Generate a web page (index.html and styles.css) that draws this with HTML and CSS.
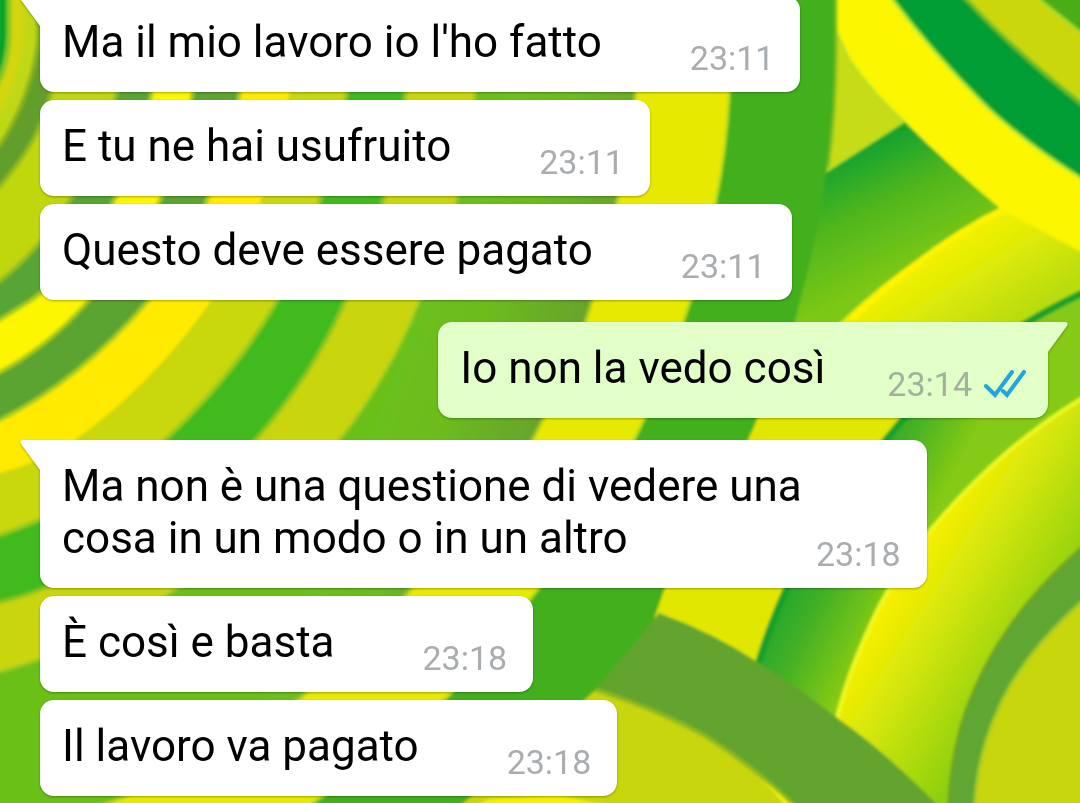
FILE: index.html
```html
<!DOCTYPE html>
<html lang="it">
<head>
  <meta charset="UTF-8">
  <meta name="viewport" content="width=device-width, initial-scale=1">
  <title>Chat</title>
  <link rel="stylesheet" href="styles.css">
</head>
<body>

  <!-- Wallpaper -->
  <svg class="wallpaper" viewBox="0 0 1080 803" preserveAspectRatio="xMidYMid slice" aria-hidden="true">
    <defs>
      <filter id="soft" x="-5%" y="-5%" width="110%" height="110%"><feGaussianBlur stdDeviation="1.6"/></filter>
      <linearGradient id="leaf" gradientUnits="userSpaceOnUse" x1="850" y1="145" x2="910" y2="270">
        <stop offset="0" stop-color="#0da032"/><stop offset=".45" stop-color="#4db51e"/><stop offset="1" stop-color="#7cc816"/>
      </linearGradient>
      <linearGradient id="leaf2" gradientUnits="userSpaceOnUse" x1="795" y1="500" x2="910" y2="560">
        <stop offset="0" stop-color="#0ba336"/><stop offset=".5" stop-color="#3fae26"/><stop offset="1" stop-color="#85ca14"/>
      </linearGradient>
      <linearGradient id="lemon" gradientUnits="userSpaceOnUse" x1="900" y1="570" x2="1030" y2="650">
        <stop offset="0" stop-color="#fbf000"/><stop offset=".4" stop-color="#d3e60a"/><stop offset="1" stop-color="#8fd00c"/>
      </linearGradient>
      <linearGradient id="lemon2" gradientUnits="userSpaceOnUse" x1="940" y1="235" x2="1000" y2="330">
        <stop offset="0" stop-color="#f8f402"/><stop offset=".5" stop-color="#dbe907"/><stop offset="1" stop-color="#b9dc0e"/>
      </linearGradient>
      <linearGradient id="moss" gradientUnits="userSpaceOnUse" x1="380" y1="400" x2="530" y2="460">
        <stop offset="0" stop-color="#6bc019"/><stop offset=".4" stop-color="#6cbc1e"/><stop offset="1" stop-color="#66a32c"/>
      </linearGradient>
    </defs>
    <g filter="url(#soft)">
      <rect x="-20" y="-20" width="1120" height="843" fill="#fcf600"/>

      <!-- right side, top corner -->
      <path d="M893 -20V0Q933 53 980 100Q1020 141 1100 190V-20Z" fill="#009e34" stroke="#a8e82c" stroke-width="3"/>
      <path d="M947 -20L967 0Q1020 57 1100 118V-20Z" fill="#cbd70c" stroke="#6cbf22" stroke-width="4"/>
      <path d="M1020 -20L1040 0L1100 48V-20Z" fill="#4cad18" stroke="#a6dc28" stroke-width="3"/>

      <!-- right side, middle -->
      <path d="M836 30L850 60Q875 95 905 122L826 172Z" fill="#c5dc14" stroke="#b5e52c" stroke-width="2"/>
      <path d="M827 172L905 122Q950 167 1002 210Q930 245 850 320L700 480V300Z" fill="url(#leaf)"/>
      <path d="M1002 210L1100 262V500H700L759 419Q850 285 1002 210Z" fill="url(#lemon2)"/>
      <path d="M1002 210Q930 245 852 319" fill="none" stroke="#fff400" stroke-width="6"/>
      <path d="M759 419L640 620L760 680L950 400Z" fill="#e1e705"/>
      <path d="M1100 285Q990 333 903 419Q835 500 786 590Q768 630 757 668L850 740L1100 500Z" fill="url(#leaf2)"/>
      <path d="M1100 285Q990 333 903 419Q835 500 786 590Q768 630 757 668" fill="none" stroke="#16a02c" stroke-width="7"/>
      <path d="M1100 388Q1033 425 977 480Q915 540 880 605Q848 670 836 722L940 823H1100Z" fill="url(#lemon)"/>
      <path d="M1100 388Q1033 425 977 480Q915 540 880 605Q848 670 836 722" fill="none" stroke="#eefb20" stroke-width="4"/>
      <path d="M1100 532Q1010 605 974 690Q949 745 948 823H1100Z" fill="#60a630" stroke="#6da526" stroke-width="3"/>
      <path d="M1100 586Q1026 647 999 707Q974 760 974 823H1100Z" fill="#c7d60b" stroke="#9fcb25" stroke-width="3"/>

      <!-- rings of the left side, outermost first -->
      <path d="M836 -20L836 50Q836 110 827 168Q816 245 795 320Q775 381 748 440Q712 512 664 590L652 625L602 690L620 720L470 823H-20V-20Z" fill="#42af1c"/>
      <path d="M836 -20L836 50Q836 110 828 168" fill="none" stroke="#7fbf1a" stroke-width="3"/>
      <path d="M735 -20L734 0Q734 50 729 96Q726 150 716 200Q706 255 690 301Q669 370 634 440Q593 518 537 590Q498 643 447 697Q391 752 318 799L285 823H-20V-20Z" fill="#e8e905" stroke="#b7df1a" stroke-width="3"/>
      <path d="M642 -20L641 0Q640 50 635 96Q629 150 617 200Q608 250 592 301Q570 370 532 440Q483 518 410 590Q363 642 301 697Q220 757 118 799L50 823H-20V-20Z" fill="url(#moss)" stroke="#a9ca18" stroke-width="3"/>
      <path d="M481 -20L480 0Q480 50 475 96Q470 150 457 200Q443 252 420 301Q391 374 340 440Q269 532 175 590Q90 648 0 672L-20 677V-20Z" fill="#c9d50d" stroke="#97cb20" stroke-width="3"/>
      <path d="M410 -20V0Q410 50 405 96Q399 150 383 200Q369 253 345 301Q312 376 255 440Q178 540 70 577Q35 594 0 602L-20 606V-20Z" fill="#40ba1c" stroke="#8bc51c" stroke-width="4"/>
      <path d="M351 -20V0Q351 50 346 96Q338 150 320 200Q306 250 277 301Q235 375 165 440Q88 506 0 535L-20 541V-20Z" fill="#c9d70c" stroke="#94c91b" stroke-width="4"/>
      <path d="M294 -20V0Q294 50 289 96Q282 150 261 200Q245 255 211 301Q155 382 75 440Q40 463 0 473L-20 477V-20Z" fill="#ffea00"/>
      <path d="M244 -20V0Q244 50 239 96Q230 150 207 200Q186 250 148 301Q80 380 0 420L-20 428V-20Z" fill="#5ba433" stroke="#a8cc18" stroke-width="4"/>
      <path d="M197 -20V0Q198 50 192 96Q183 150 160 200Q133 258 88 301Q50 345 0 372L-20 382V-20Z" fill="#fcf600" stroke="#a8cc18" stroke-width="4"/>
      <path d="M155 -20V0Q157 50 151 96Q140 150 114 200Q80 268 30 301L-20 332V-20Z" fill="#58a435" stroke="#a8cc18" stroke-width="4"/>
      <path d="M120 -20V0Q122 50 116 96Q103 150 70 200Q42 248 0 281L-20 294V-20Z" fill="#c0d60b" stroke="#8fbf20" stroke-width="4"/>
      <path d="M56 -20V50Q56 90 40 125Q26 160 -20 208V-20Z" fill="#629f2c" stroke="#8ebb1c" stroke-width="4"/>
      <path d="M38 -20V40Q32 95 0 145L-20 160V-20Z" fill="#bfd816" stroke="#8bb41a" stroke-width="4"/>
      <path d="M24 -20V30Q20 85 -5 118V-20Z" fill="#d3d509"/>
      <path d="M9 -20V30Q9 65 -5 88V-20Z" fill="#04a52b" stroke="#84c920" stroke-width="5"/>

      <!-- bottom band -->
      <path d="M596 690Q659 710 707 737Q755 765 800 823H440Z" fill="#c8d60b"/>
      <path d="M488 799L560 795L680 823H450Z" fill="#f5f000"/>
      <path d="M659 613Q714 633 759 663Q807 694 840 720Q890 755 955 823H815L792 803Q755 768 707 737Q659 710 596 688Q630 650 659 613Z" fill="#62a42e"/>
      <path d="M596 690Q659 710 707 737Q755 768 792 803" fill="none" stroke="#8fb91a" stroke-width="4"/>
    </g>
  </svg>

  <main class="chat">
    <div class="group">
      <div class="bubble first">
        <svg class="tail" viewBox="0 0 20 30" aria-hidden="true"><path d="M20 0H3Q-1 0 1 4L20 30Z"/></svg>
        <p class="text">Ma il mio lavoro io l'ho fatto</p>
        <time class="time">23:11</time>
      </div>
      <div class="bubble">
        <p class="text">E tu ne hai usufruito</p>
        <time class="time">23:11</time>
      </div>
      <div class="bubble">
        <p class="text">Questo deve essere pagato</p>
        <time class="time">23:11</time>
      </div>
    </div>

    <div class="group sent">
      <div class="bubble first">
        <svg class="tail" viewBox="0 0 20 30" aria-hidden="true"><path d="M0 0H17Q21 0 19 4L0 30Z"/></svg>
        <p class="text">Io non la vedo così</p>
        <div class="status">
          <time class="time">23:14</time>
          <svg class="ticks" viewBox="0 0 42 28" role="img" aria-label="Letto"><path d="M2 16L11 25L28 2M19 21L23 25L40 2"/></svg>
        </div>
      </div>
    </div>

    <div class="group">
      <div class="bubble first long">
        <svg class="tail" viewBox="0 0 20 30" aria-hidden="true"><path d="M20 0H3Q-1 0 1 4L20 30Z"/></svg>
        <p class="text">Ma non è una questione di vedere una cosa in un modo o in un altro</p>
        <time class="time">23:18</time>
      </div>
      <div class="bubble">
        <p class="text">È così e basta</p>
        <time class="time">23:18</time>
      </div>
      <div class="bubble">
        <p class="text">Il lavoro va pagato</p>
        <time class="time">23:18</time>
      </div>
    </div>
  </main>

</body>
</html>
```
FILE: styles.css
```css
* {
  box-sizing: border-box;
}
body {
  margin: 0;
  font-family: Roboto, sans-serif;
  background: #42af1c;
}
.wallpaper {
  position: fixed;
  inset: 0;
  width: 100%;
  height: 100%;
}
.chat {
  position: relative;
  height: 100vh;
  overflow: hidden;
  display: flex;
  flex-direction: column;
  justify-content: flex-end;
  gap: 22px;
  padding: 0 32px 7px 40px;
}
.group {
  display: flex;
  flex-direction: column;
  align-items: flex-start;
  gap: 8px;
  flex-shrink: 0;
}
.sent {
  align-items: flex-end;
}
.bubble {
  position: relative;
  display: flex;
  align-items: flex-end;
  gap: 88px;
  padding: 20px 26px 18px 22px;
  border-radius: 14px;
  background: #fff;
  color: #000;
  filter: drop-shadow(0 1px 1px rgba(0, 0, 0, 0.3));
}
.first {
  border-top-left-radius: 0;
}
.sent .bubble {
  gap: 62px;
  padding-right: 22px;
  border-radius: 14px 0 14px 14px;
  background: #e1ffc7;
}
.long {
  gap: 0;
}
.long .text {
  width: 754px;
}
.text {
  margin: 0 0 6px;
  font-size: 44px;
  line-height: 52px;
}
.status {
  display: flex;
  align-items: center;
  gap: 12px;
}
.time {
  font-size: 34px;
  line-height: 32px;
  color: #a9adb0;
}
.sent .time {
  color: #a3b19b;
}
.tail {
  position: absolute;
  top: 0;
  right: 100%;
  width: 20px;
  height: 30px;
  fill: #fff;
}
.sent .tail {
  right: auto;
  left: 100%;
  fill: #e1ffc7;
}
.ticks {
  width: 42px;
  height: 28px;
  fill: none;
  stroke: #1fa6dd;
  stroke-width: 4;
  stroke-linecap: round;
  stroke-linejoin: miter;
}
```
